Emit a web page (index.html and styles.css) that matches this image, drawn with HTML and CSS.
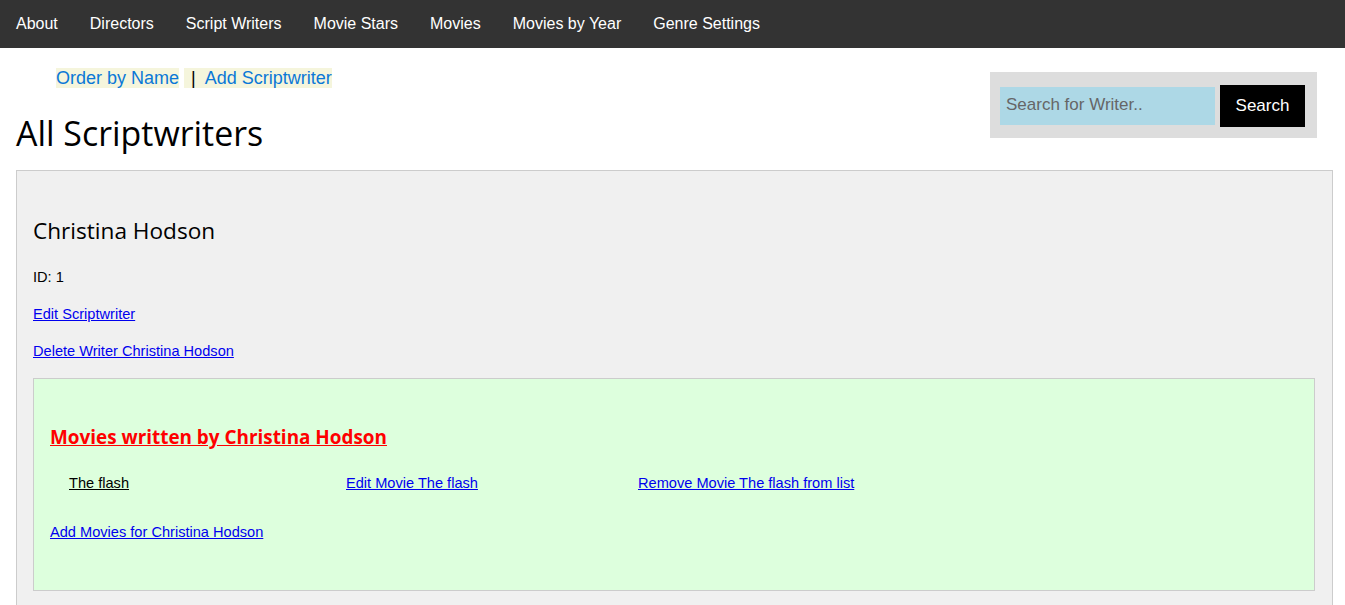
FILE: index.html
```html
<!DOCTYPE html>
<html lang="en">
<head>
<meta charset="utf-8">
<title>All Scriptwriters</title>
<link rel="stylesheet" href="styles.css">
</head>
<body>
<nav class="topnav">
  <a href="#">About</a>
  <a href="#">Directors</a>
  <a href="#">Script Writers</a>
  <a href="#">Movie Stars</a>
  <a href="#">Movies</a>
  <a href="#">Movies by Year</a>
  <a href="#">Genre Settings</a>
</nav>

<header class="page-head">
  <div class="head-left">
    <div class="sublinks">
      <a class="hl" href="#">Order by Name</a> <span class="hl sep">&nbsp;|&nbsp; <a href="#">Add Scriptwriter</a></span>
    </div>
    <h1 class="title">All Scriptwriters</h1>
  </div>
  <form class="search" onsubmit="return false">
    <input class="search-input" type="text" placeholder="Search for Writer..">
    <button class="search-btn" type="submit">Search</button>
  </form>
</header>

<section class="card">
  <h2 class="writer-name">Christina Hodson</h2>
  <p class="line first">ID: 1</p>
  <p class="line"><a class="plain-link" href="#">Edit Scriptwriter</a></p>
  <p class="line"><a class="plain-link" href="#">Delete Writer Christina Hodson</a></p>

  <div class="movies">
    <h3 class="movies-title"><a href="#">Movies written by Christina Hodson</a></h3>
    <div class="movie-row">
      <a class="movie-name" href="#">The flash</a>
      <a class="plain-link" href="#">Edit Movie The flash</a>
      <a class="plain-link" href="#">Remove Movie The flash from list</a>
    </div>
    <p class="add-movies"><a class="plain-link" href="#">Add Movies for Christina Hodson</a></p>
  </div>
</section>
</body>
</html>
```

FILE: styles.css
```css
html, body {
  margin: 0;
  padding: 0;
  background: #fff;
}
body {
  font-family: "Liberation Sans", Arial, sans-serif;
  font-size: 14.6px;
  color: #000;
}

.topnav {
  display: flex;
  background: #333;
  height: 48px;
}
.topnav a {
  color: #fff;
  text-decoration: none;
  font-size: 16px;
  line-height: 48px;
  padding: 0 16px;
}

.page-head {
  display: flex;
  justify-content: space-between;
  align-items: flex-start;
  padding: 0 28px 0 16px;
}
.head-left {
  padding-top: 20px;
}
.sublinks {
  font-size: 18px;
  line-height: 21px;
  padding-left: 40px;
}
.hl {
  background: #f5f5dc;
}
.sep {
  padding-left: 2px;
}
.sublinks a {
  color: #0a78d7;
  text-decoration: none;
}
.title {
  margin: 24px 0 0 0;
  font-family: "Open Sans", sans-serif;
  font-weight: 400;
  font-size: 33.9px;
  line-height: 40px;
}

.search {
  margin-top: 24px;
  display: flex;
  align-items: center;
  gap: 5px;
  background: #ddd;
  padding: 13px 12px 11px 10px;
}
.search-input {
  width: 215px;
  height: 38px;
  box-sizing: border-box;
  border: none;
  outline: none;
  background: #add8e6;
  font-family: "Liberation Sans", Arial, sans-serif;
  font-size: 17px;
  padding: 0 6px 2px 6px;
  color: #000;
}
.search-input::placeholder {
  color: #666;
}
.search-btn {
  width: 85px;
  height: 42px;
  border: none;
  background: #000;
  color: #fff;
  font-family: "Liberation Sans", Arial, sans-serif;
  font-size: 17px;
  padding: 0;
}

.card {
  margin: 17px 12px 0 16px;
  border: 1px solid #ccc;
  background: #f0f0f0;
  padding: 44px 17px 40px 16px;
}
.writer-name {
  margin: 0;
  font-family: "Open Sans", sans-serif;
  font-weight: 400;
  font-size: 22.6px;
  line-height: 32px;
}
.line {
  margin: 21px 0 0 0;
  line-height: 16px;
}
.line.first {
  margin-top: 22px;
}
.plain-link {
  color: #0000ee;
  text-decoration: underline;
}

.movies {
  margin-top: 19px;
  border: 1px solid #ccc;
  background: #dfd;
  padding: 44px 16px 50px 16px;
}
.movies-title {
  margin: 0;
  font-family: "Open Sans", sans-serif;
  font-weight: 700;
  font-size: 18.9px;
  line-height: 28px;
}
.movies-title a {
  color: #f00;
  text-decoration: underline;
}
.movie-row {
  margin-top: 24px;
  display: grid;
  grid-template-columns: 277px 292px auto;
  padding-left: 19px;
  line-height: 16px;
}
.movie-row a {
  justify-self: start;
}
.movie-name {
  color: #000;
  text-decoration: underline;
}
.add-movies {
  margin: 33px 0 0 0;
  line-height: 16px;
}
```
